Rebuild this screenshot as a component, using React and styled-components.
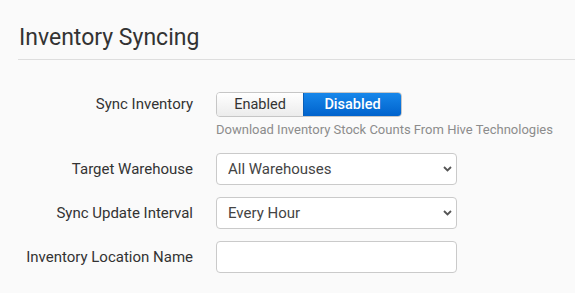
import styled, { createGlobalStyle } from "styled-components"

const GlobalStyle = createGlobalStyle`
  * { box-sizing: border-box; }
  body {
    margin: 0;
    background: #fafafa;
    font-family: Roboto, "Liberation Sans", Arial, sans-serif;
    color: #333;
  }
`

const Page = styled.div`
  padding: 24px 0 0 18px;
`

const Header = styled.div`
  border-bottom: 1px solid #dedede;
  padding: 0 0 7px 1px;
  margin-bottom: 32px;
`

const Title = styled.h1`
  margin: 0;
  font-size: 23px;
  line-height: 28px;
  font-weight: 400;
  color: #333;
`

const Form = styled.div`
  display: flex;
  flex-direction: column;
  gap: 12px;
`

const Row = styled.div`
  display: grid;
  grid-template-columns: 175px 241px;
  column-gap: 23px;
  align-items: ${p => (p.$top ? "start" : "center")};
`

const Label = styled.label`
  text-align: right;
  font-size: 15px;
  line-height: 25px;
  color: #333;
  white-space: nowrap;
`

const Toggle = styled.div`
  display: flex;
  width: 186px;
  height: 25px;
  border-radius: 4px;
  overflow: hidden;
  border: 1px solid #c6c6c6;
`

const ToggleButton = styled.button`
  flex: ${p => (p.$active ? "0 0 98px" : "1")};
  border: none;
  margin: 0;
  padding: 0;
  font-family: inherit;
  font-size: 14.5px;
  font-weight: ${p => (p.$active ? 500 : 400)};
  color: ${p => (p.$active ? "#fff" : "#333")};
  background: ${p =>
    p.$active
      ? "linear-gradient(#1787ea, #0062cc)"
      : "linear-gradient(#ffffff, #ececec)"};
  border-left: ${p => (p.$active ? "1px solid #0a5fb8" : "none")};
`

const Help = styled.div`
  margin: 4px 0 2px;
  font-size: 13px;
  line-height: 18px;
  color: #8c8c8c;
  white-space: nowrap;
`

const SelectBox = styled.div`
  position: relative;
  width: 241px;
`

const Select = styled.select`
  appearance: none;
  width: 100%;
  height: 32px;
  padding: 0 30px 0 11px;
  background: #fff;
  border: 1px solid #cacaca;
  border-radius: 4px;
  font-family: inherit;
  font-size: 15px;
  color: #444;
`

const Chevron = styled.svg`
  position: absolute;
  right: 5px;
  top: 13px;
  pointer-events: none;
`

const Input = styled.input`
  width: 241px;
  height: 32px;
  background: #fff;
  border: 1px solid #cacaca;
  border-radius: 4px;
  font-family: inherit;
  font-size: 15px;
`

function Dropdown({ value }) {
  return (
    <SelectBox>
      <Select defaultValue={value}>
        <option>{value}</option>
      </Select>
      <Chevron width="9" height="6" viewBox="0 0 9 6">
        <path d="M1 1l3.5 3.5L8 1" fill="none" stroke="#555" strokeWidth="1.8" />
      </Chevron>
    </SelectBox>
  )
}

export default function App() {
  return (
    <Page>
      <GlobalStyle />
      <Header>
        <Title>Inventory Syncing</Title>
      </Header>
      <Form>
        <Row $top>
          <Label>Sync Inventory</Label>
          <div>
            <Toggle>
              <ToggleButton>Enabled</ToggleButton>
              <ToggleButton $active>Disabled</ToggleButton>
            </Toggle>
            <Help>Download Inventory Stock Counts From Hive Technologies</Help>
          </div>
        </Row>
        <Row>
          <Label>Target Warehouse</Label>
          <Dropdown value="All Warehouses" />
        </Row>
        <Row>
          <Label>Sync Update Interval</Label>
          <Dropdown value="Every Hour" />
        </Row>
        <Row>
          <Label>Inventory Location Name</Label>
          <Input type="text" />
        </Row>
      </Form>
    </Page>
  )
}
